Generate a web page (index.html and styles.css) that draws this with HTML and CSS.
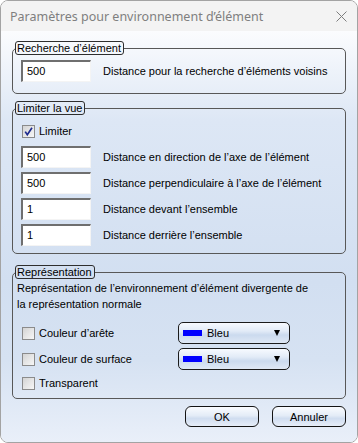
FILE: index.html
```html
<!DOCTYPE html>
<html lang="fr">
<head>
<meta charset="utf-8">
<title>Paramètres pour environnement d’élément</title>
<link rel="stylesheet" href="styles.css">
</head>
<body>
<div class="window">
  <div class="titlebar">
    <span class="title">Paramètres pour environnement d’élément</span>
    <svg class="close" width="11" height="11" viewBox="0 0 11 11"><path d="M0.5 0.5 L10.5 10.5 M10.5 0.5 L0.5 10.5" stroke="#7d7d7d" stroke-width="1" fill="none"/></svg>
  </div>
  <div class="content">
    <fieldset class="group g1">
      <legend>Recherche d’élément</legend>
      <div class="inner">
        <div class="row"><div class="input">500</div><span class="label">Distance pour la recherche d’éléments voisins</span></div>
      </div>
    </fieldset>

    <fieldset class="group g2">
      <legend>Limiter la vue</legend>
      <div class="inner">
        <div class="check-row first">
          <span class="cb checked"><svg width="11" height="11" viewBox="0 0 11 11"><path d="M2.2 5.6 L4.3 8.8 L9 1.8" stroke="#1f2c8f" stroke-width="1.7" fill="none"/></svg></span>
          <span class="label">Limiter</span>
        </div>
        <div class="fields">
          <div class="row"><div class="input">500</div><span class="label">Distance en direction de l’axe de l’élément</span></div>
          <div class="row"><div class="input">500</div><span class="label">Distance perpendiculaire à l’axe de l’élément</span></div>
          <div class="row"><div class="input">1</div><span class="label">Distance devant l’ensemble</span></div>
          <div class="row"><div class="input">1</div><span class="label">Distance derrière l’ensemble</span></div>
        </div>
      </div>
    </fieldset>

    <fieldset class="group g3">
      <legend>Représentation</legend>
      <div class="inner">
        <p class="desc">Représentation de l’environnement d’élément divergente de<br>la représentation normale</p>
        <div class="opts">
          <div class="opt">
            <div class="check-row"><span class="cb"></span><span class="label">Couleur d’arête</span></div>
            <div class="dd"><span class="swatch"></span><span class="dd-text">Bleu</span><span class="arrow"></span></div>
          </div>
          <div class="opt">
            <div class="check-row"><span class="cb"></span><span class="label">Couleur de surface</span></div>
            <div class="dd"><span class="swatch"></span><span class="dd-text">Bleu</span><span class="arrow"></span></div>
          </div>
          <div class="opt last">
            <div class="check-row"><span class="cb"></span><span class="label">Transparent</span></div>
          </div>
        </div>
      </div>
    </fieldset>

    <div class="buttons">
      <button class="btn">OK</button>
      <button class="btn">Annuler</button>
    </div>
  </div>
</div>
</body>
</html>
```
FILE: styles.css
```css
html, body {
  margin: 0;
  padding: 0;
  background: #ffffff;
}
body {
  font-family: "Liberation Sans", Arial, sans-serif;
  font-size: 11px;
  color: #000;
}
.window {
  width: 358px;
  height: 443px;
  box-sizing: border-box;
  border: 1px solid #a3a3a3;
  border-radius: 8px;
  overflow: hidden;
  display: flex;
  flex-direction: column;
}
.titlebar {
  height: 30px;
  flex: none;
  background: #f3f3f3;
  display: flex;
  align-items: center;
  justify-content: space-between;
  padding: 0 10px 0 9px;
}
.title {
  font-family: "Noto Sans", sans-serif;
  font-size: 12.5px;
  color: #7f7f7f;
}
.close { display: block; }
.content {
  flex: 1;
  background: linear-gradient(to bottom, #fbfcfe 0px, #dde7f5 90px, #d2dff1 250px, #d6e2f2 330px, #e9eff9 411px);
  padding: 10px 11px 0 11px;
}
.group {
  margin: 0;
  padding: 0;
  border: 1px solid #585858;
  border-radius: 5px;
  min-width: 0;
}
.group legend {
  margin-left: 2px;
  padding: 0 2px 0 1px;
  border: 1px solid #2e2e2e;
  border-radius: 3px;
  line-height: 12px;
  font-size: 11px;
}
.g2 { margin-top: 7px; }
.g3 { margin-top: 11px; }
.g1 .inner { padding: 5px 8px 11px 8px; }
.g2 .inner { padding: 8px 8px 7px 8px; }
.g3 .inner { padding: 1px 8px 5px 4px; }
.row {
  display: flex;
  align-items: center;
  gap: 12px;
  height: 22px;
}
.input {
  width: 70px;
  height: 22px;
  box-sizing: border-box;
  border-style: solid;
  border-width: 2px 1px 1px 2px;
  border-color: #6f6f6f #f4f4f4 #f4f4f4 #6f6f6f;
  background: #fff;
  padding-left: 4px;
  line-height: 18px;
}
.check-row {
  display: flex;
  align-items: center;
  gap: 4px;
  height: 16px;
}
.g2 .check-row { margin-left: 1px; }
.cb {
  width: 13px;
  height: 13px;
  box-sizing: border-box;
  border: 1px solid #8b8b8b;
  background: linear-gradient(135deg, #d4d4d4, #f7f7f7);
  display: flex;
  align-items: center;
  justify-content: center;
}
.cb svg { display: block; }
.fields {
  margin-top: 7px;
  display: flex;
  flex-direction: column;
  gap: 4px;
}
.desc {
  margin: 0;
  line-height: 16px;
}
.opts {
  margin: 10px 0 0 5px;
  display: flex;
  flex-direction: column;
  gap: 4px;
}
.opt {
  display: grid;
  grid-template-columns: 156px 112px;
  align-items: center;
  height: 22px;
}
.opt.last { height: 20px; margin-top: -1px; }
.dd {
  height: 22px;
  box-sizing: border-box;
  border: 1px solid #1b1b1b;
  border-radius: 5px;
  background: linear-gradient(to bottom, #f7faff 0%, #e2ebf7 40%, #cbdaee 60%, #dfe8f5 100%);
  display: flex;
  align-items: center;
  padding: 0 9px 0 4px;
}
.swatch {
  width: 19px;
  height: 6px;
  background: #0000ff;
  flex: none;
}
.dd-text {
  margin-left: 5px;
  flex: 1;
}
.arrow {
  width: 0;
  height: 0;
  border-left: 3px solid transparent;
  border-right: 3px solid transparent;
  border-top: 6px solid #000;
}
.buttons {
  margin-top: 7px;
  display: flex;
  justify-content: flex-end;
  gap: 13px;
}
.btn {
  width: 74px;
  height: 21px;
  margin: 0;
  padding: 0;
  border: 1px solid #141414;
  border-radius: 6px;
  background: linear-gradient(to bottom, #fafcff 0%, #e4ecf7 45%, #d0ddf0 60%, #e6edf8 100%);
  font-family: "Liberation Sans", Arial, sans-serif;
  font-size: 11px;
  color: #000;
}
```
